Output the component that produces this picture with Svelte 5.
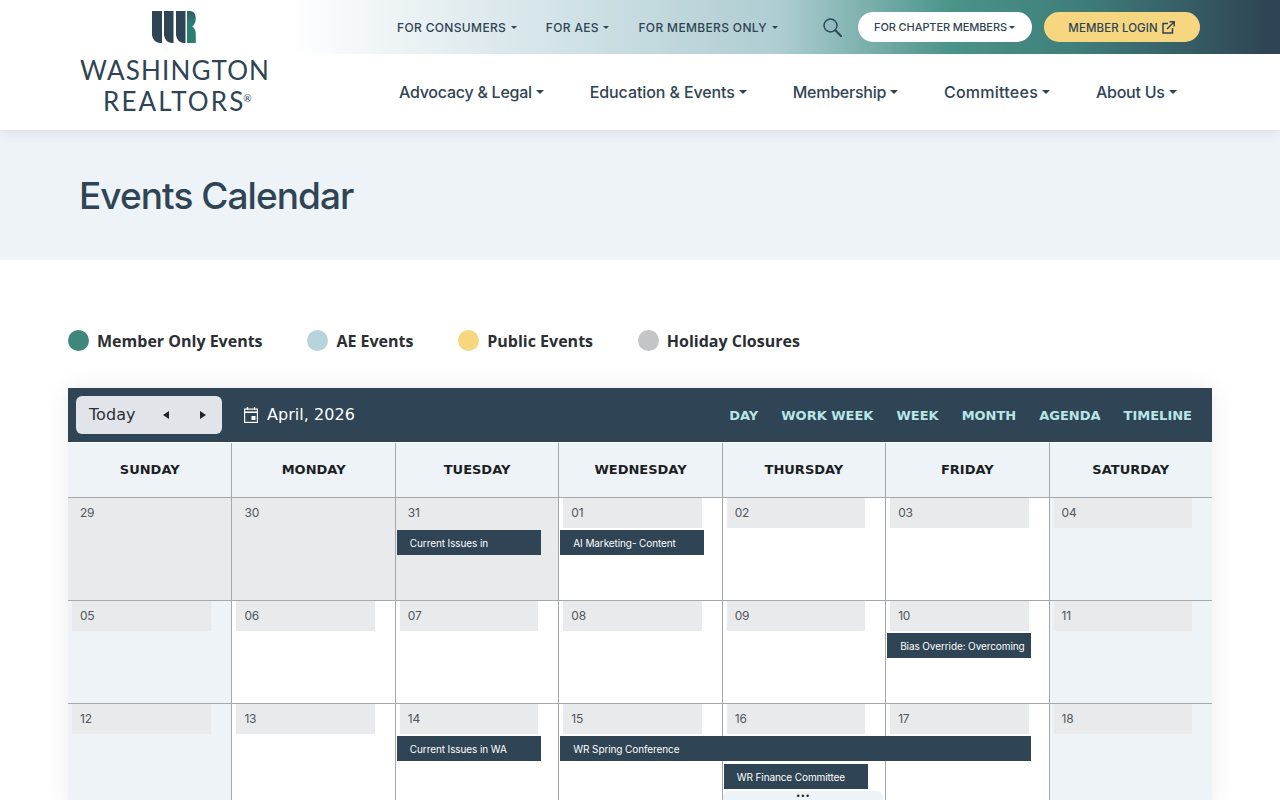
<script>
	const topLinks = [
		{ label: 'FOR CONSUMERS', gap: 29 },
		{ label: 'FOR AES', gap: 29 },
		{ label: 'FOR MEMBERS ONLY', gap: 45 }
	];
	// tracking differs per label so the widths land on the reference
	const mainLinks = [
		{ label: 'Advocacy & Legal', track: -0.25 },
		{ label: 'Education & Events', track: -0.1 },
		{ label: 'Membership', track: -0.25 },
		{ label: 'Committees', track: 0.25 },
		{ label: 'About Us', track: -0.25 }
	];
	const legend = [
		{ label: 'Member Only Events', color: '#3f877c' },
		{ label: 'AE Events', color: '#b7d4dd' },
		{ label: 'Public Events', color: '#f6d780' },
		{ label: 'Holiday Closures', color: '#c4c5c7' }
	];
	const views = ['DAY', 'WORK WEEK', 'WEEK', 'MONTH', 'AGENDA', 'TIMELINE'];
	const dayNames = ['SUNDAY', 'MONDAY', 'TUESDAY', 'WEDNESDAY', 'THURSDAY', 'FRIDAY', 'SATURDAY'];

	// col is 1-based, row is the grid row of the week
	const weeks = [
		{
			days: ['29', '30', '31', '01', '02', '03', '04'],
			outside: 3,
			events: [
				{ col: 3, span: 1, row: 2, title: 'Current Issues in' },
				{ col: 4, span: 1, row: 2, title: 'AI Marketing- Content' }
			]
		},
		{
			days: ['05', '06', '07', '08', '09', '10', '11'],
			outside: 0,
			events: [{ col: 6, span: 1, row: 2, title: 'Bias Override: Overcoming' }]
		},
		{
			days: ['12', '13', '14', '15', '16', '17', '18'],
			outside: 0,
			more: 5,
			events: [
				{ col: 3, span: 1, row: 2, title: 'Current Issues in WA' },
				{ col: 4, span: 3, row: 2, title: 'WR Spring Conference' },
				{ col: 5, span: 1, row: 4, title: 'WR Finance Committee' }
			]
		}
	];
</script>

<header class="site-header">
	<a class="logo" href="#home">
		<svg class="logo__mark" width="44" height="32" viewBox="0 0 44 32" aria-hidden="true">
			<defs>
				<linearGradient id="markR" x1="0" y1="0" x2="0" y2="1">
					<stop offset="0" stop-color="#2f5a60" />
					<stop offset="0.4" stop-color="#2a7f75" />
					<stop offset="1" stop-color="#2a8073" />
				</linearGradient>
			</defs>
			<path d="M0 0h10v32H8.500C3.500 32 0 28 0 23z" fill="#2f4454" />
			<path d="M12 0h9.500v32H20c-4.500 0-8-4-8-9z" fill="#2f4454" />
			<path d="M24 0h9.500v32H32c-4.500 0-8-4-8-9z" fill="#2f4454" />
			<path d="M35 0h3c3.500 0 5.800 3 5.800 7.200 0 4-1.500 6.800-3.600 8.300 2.300 1.500 3.600 4 3.600 7.500V32H35z" fill="url(#markR)" />
		</svg>
		<span class="logo__line logo__line--first">WASHINGTON</span>
		<span class="logo__line logo__line--second">REALTORS<sup>®</sup></span>
	</a>

	<div class="site-header__nav">
		<nav class="topbar">
			{#each topLinks as link}
				<a class="topbar__link caret" href="#top" style="margin-right: {link.gap}px">{link.label}</a>
			{/each}
			<svg class="topbar__search" width="19" height="19" viewBox="0 0 19 19" fill="none" aria-hidden="true">
				<circle cx="7.5" cy="7.5" r="6.5" stroke="#2f4454" stroke-width="1.4" />
				<path d="M12.300 12.300 18 18" stroke="#2f4454" stroke-width="2" stroke-linecap="round" />
			</svg>
			<a class="pill pill--white caret" href="#chapter">FOR CHAPTER MEMBERS</a>
			<a class="pill pill--yellow" href="#login">
				MEMBER LOGIN
				<svg width="13" height="13" viewBox="0 0 13 13" fill="none" aria-hidden="true">
					<path d="M6 2.500H1V12h9.500V7" stroke="#2f4454" stroke-width="1.5" />
					<path d="M5 8 12 1M7.500 .8h4.700v4.700" stroke="#2f4454" stroke-width="1.5" />
				</svg>
			</a>
		</nav>
		<nav class="mainnav">
			{#each mainLinks as link}
				<a class="mainnav__link caret" href="#main" style="letter-spacing: {link.track}px">{link.label}</a>
			{/each}
		</nav>
	</div>
</header>

<section class="hero">
	<h1>Events Calendar</h1>
</section>

<main class="content">
	<ul class="legend">
		{#each legend as item}
			<li class="legend__item">
				<span class="legend__dot" style="background: {item.color}"></span>
				{item.label}
			</li>
		{/each}
	</ul>

	<div class="calendar">
		<div class="toolbar">
			<div class="toolbar__nav">
				<span class="toolbar__today">Today</span>
				<span class="arrow arrow--left"></span>
				<span class="arrow arrow--right"></span>
			</div>
			<div class="toolbar__date">
				<svg width="14" height="16" viewBox="0 0 14 16" fill="none" aria-hidden="true">
					<rect x=".6" y="2.1" width="12.800" height="13.300" stroke="#fff" stroke-width="1.2" />
					<path d="M.6 5.200h12.800" stroke="#fff" stroke-width="1.6" />
					<path d="M3.500 0v3M10.500 0v3" stroke="#fff" stroke-width="1.4" />
					<rect x="7.5" y="9" width="4" height="4" fill="#fff" />
				</svg>
				<span class="toolbar__label">April, 2026</span>
			</div>
			<div class="toolbar__views">
				{#each views as view}
					<span>{view}</span>
				{/each}
			</div>
		</div>

		<div class="days">
			{#each dayNames as name}
				<div class="days__name">{name}</div>
			{/each}
		</div>

		{#each weeks as week}
			<div class="week">
				{#each week.days as day, i}
					<div
						class="cell"
						class:cell--weekend={i === 0 || i === 6}
						class:cell--outside={i < week.outside}
						style="grid-column: {i + 1}"
					>
						<div class="cell__date">{day}</div>
					</div>
				{/each}
				{#each week.events as event}
					<div class="event" style="grid-column: {event.col} / span {event.span}; grid-row: {event.row}">
						{event.title}
					</div>
				{/each}
				{#if week.more}
					<div class="more" style="grid-column: {week.more}">•••</div>
				{/if}
			</div>
		{/each}
	</div>
</main>

<style>
	:global(body) {
		background: #fff;
		color: #2f4454;
		font-family: Inter, "Liberation Sans", sans-serif;
	}

	a {
		color: inherit;
		text-decoration: none;
	}

	/* Header */
	.site-header {
		position: relative;
		display: flex;
		height: 130px;
		background: #fff;
		box-shadow: 0 2px 12px rgba(47, 68, 84, 0.12);
	}

	.logo {
		display: flex;
		flex: 0 0 290px;
		flex-direction: column;
		align-items: flex-start;
		padding: 11px 0 0 80px;
		box-sizing: border-box;
		color: #2f4454;
		font-family: Lato, sans-serif;
		font-size: 26px;
		line-height: 31px;
		white-space: nowrap;
	}

	.logo__mark {
		margin-bottom: 12px;
		margin-left: 72px;
	}

	.logo__line--first {
		letter-spacing: 1.15px;
	}

	.logo__line--second {
		margin-left: 23px;
		letter-spacing: 2.1px;
	}

	.logo__line sup {
		margin-left: -2px;
		font-size: 10px;
		line-height: 0;
		letter-spacing: 0;
		vertical-align: 9px;
	}

	.site-header__nav {
		flex: 1;
		min-width: 0;
	}

	.topbar {
		display: flex;
		align-items: center;
		height: 54px;
		padding-left: 107px;
		box-sizing: border-box;
		background: linear-gradient(90deg, #fff 0%, #e6eff2 15%, #aecdd2 49.5%, #4a9488 66.7%, #3f7d7a 80%, #2f4454 99%);
	}

	.topbar__link {
		flex: none;
		font-size: 12px;
		font-weight: 500;
		letter-spacing: 0.35px;
		white-space: nowrap;
	}

	.topbar__link.caret::after {
		margin-left: 4.5px;
	}

	.topbar__search {
		flex: none;
		margin-right: 16px;
	}

	.pill {
		display: flex;
		flex: none;
		align-items: center;
		justify-content: center;
		height: 30px;
		border-radius: 15px;
		box-sizing: border-box;
		font-weight: 500;
		white-space: nowrap;
	}

	.pill--white {
		width: 174px;
		margin-right: 12px;
		background: #fff;
		font-size: 11px;
		letter-spacing: -0.1px;
	}

	.pill--yellow {
		gap: 4px;
		width: 156px;
		padding-top: 1px;
		background: #f6d780;
		font-size: 11.5px;
		letter-spacing: 0.1px;
	}

	.caret::after {
		content: "";
		display: inline-block;
		margin-left: 0.2em;
		vertical-align: 0.22em;
		border-top: 0.28em solid currentColor;
		border-right: 0.28em solid transparent;
		border-left: 0.28em solid transparent;
	}

	.mainnav {
		display: flex;
		align-items: center;
		gap: 46px;
		height: 76px;
		padding-left: 109px;
	}

	.mainnav__link {
		font-size: 16px;
		font-weight: 500;
		white-space: nowrap;
	}

	.mainnav__link.caret::after {
		margin-left: 3.9px;
	}

	/* Hero */
	.hero {
		display: flex;
		align-items: center;
		height: 130px;
		padding-left: 79px;
		background: #eef3f7;
	}

	.hero h1 {
		margin: 0;
		color: #2f4454;
		font-size: 37px;
		font-weight: 500;
		letter-spacing: -0.95px;
	}

	/* Legend */
	.content {
		padding: 70px 68px 60px;
	}

	.legend {
		display: flex;
		gap: 44.8px;
		height: 21px;
		margin: 0 0 37px;
		padding: 0;
		list-style: none;
	}

	.legend__item {
		display: flex;
		align-items: center;
		gap: 8px;
		color: #2b2f33;
		font-family: "Open Sans", sans-serif;
		font-size: 16px;
		font-weight: 700;
		white-space: nowrap;
	}

	.legend__dot {
		width: 21px;
		height: 21px;
		border-radius: 50%;
	}

	/* Calendar */
	.calendar {
		background: #fff;
		box-shadow: 0 0 20px rgba(47, 68, 84, 0.1);
		font-family: "DejaVu Sans", sans-serif;
	}

	.toolbar {
		display: flex;
		align-items: center;
		height: 54px;
		margin-bottom: 1px;
		padding: 0 20px 0 8px;
		background: #2f4454;
		color: #fff;
	}

	.toolbar__nav {
		display: flex;
		align-items: center;
		width: 146px;
		height: 38px;
		padding-left: 13px;
		box-sizing: border-box;
		border-radius: 6px;
		background: #e1e5ea;
		color: #2b2f33;
		font-size: 16px;
	}

	.toolbar__today {
		width: 74px;
		padding-bottom: 2px;
		letter-spacing: 0.05px;
	}

	.arrow {
		width: 0;
		height: 0;
		border-top: 4px solid transparent;
		border-bottom: 4px solid transparent;
	}

	.arrow--left {
		border-right: 6px solid #1f2327;
	}

	.arrow--right {
		margin-left: 31px;
		border-left: 6px solid #1f2327;
	}

	.toolbar__date {
		display: flex;
		align-items: center;
		gap: 9px;
		margin-left: 22px;
		font-size: 16px;
		letter-spacing: 0.05px;
	}

	.toolbar__label {
		padding-bottom: 2px;
	}

	.toolbar__views {
		display: flex;
		gap: 23px;
		margin-left: auto;
		color: #b8e6e6;
		font-size: 13px;
		font-weight: 700;
	}

	.days,
	.week {
		display: grid;
		grid-template-columns: repeat(7, 1fr);
	}

	.days {
		height: 55px;
		border-bottom: 1px solid #a6a9ab;
		box-sizing: border-box;
	}

	.days__name {
		display: flex;
		align-items: center;
		justify-content: center;
		padding-bottom: 2px;
		border-left: 1px solid #a6a9ab;
		background: #eef3f7;
		color: #1b1f24;
		font-size: 13px;
		font-weight: 700;
	}

	.days__name:first-child,
	.cell:first-child {
		border-left: 0;
	}

	.week {
		grid-template-rows: 32px 25px 3px 25px 2px 15px;
		border-bottom: 1px solid #a6a9ab;
		overflow: hidden;
	}

	.cell {
		grid-row: 1 / -1;
		border-left: 1px solid #a6a9ab;
		box-sizing: border-box;
	}

	.cell--weekend {
		background: #eef3f7;
	}

	.cell--outside {
		background: #e8eaec;
	}

	.cell__date {
		width: 138.6px;
		height: 30px;
		margin-left: 4px;
		padding-left: 8px;
		box-sizing: border-box;
		background: #e8eaec;
		color: #50565c;
		font-family: Inter, sans-serif;
		font-size: 12px;
		line-height: 30px;
		letter-spacing: -0.2px;
	}

	.event {
		margin: 0 17.5px 0 2px;
		padding-left: 13px;
		overflow: hidden;
		background: #2f4454;
		color: #fff;
		font-family: Inter, sans-serif;
		font-size: 10px;
		line-height: 27px;
		letter-spacing: -0.1px;
		white-space: nowrap;
	}

	.more {
		grid-row: 6;
		margin: 0 2px 0 1px;
		border-radius: 6px 6px 0 0;
		background: #eef3f7;
		color: #1b1f24;
		font-size: 8px;
		line-height: 12px;
		text-align: center;
	}
</style>
